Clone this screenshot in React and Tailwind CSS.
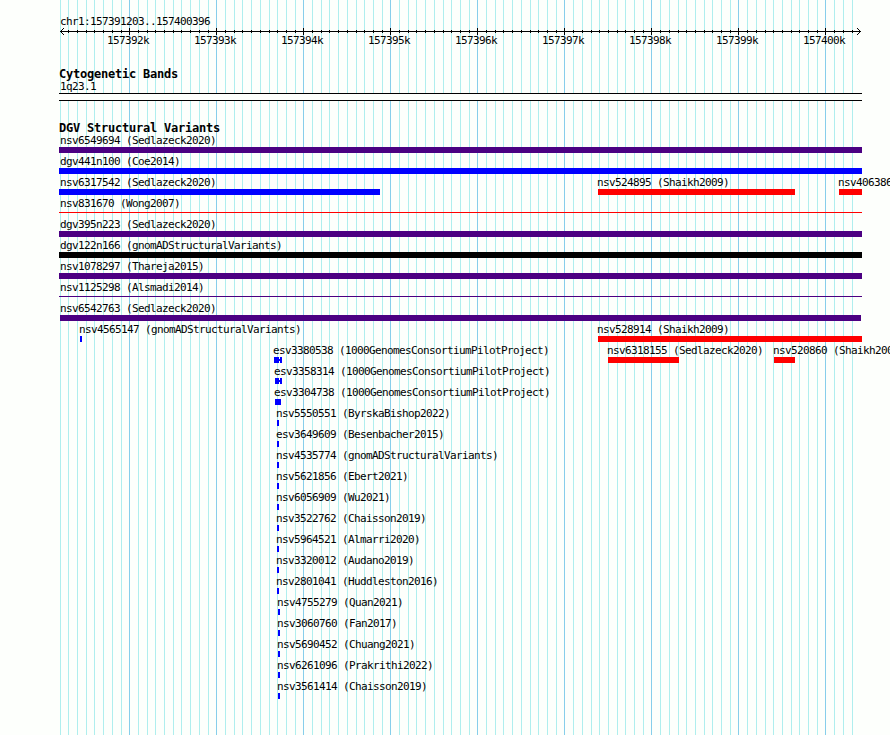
const PURPLE = 'bg-[#4b0082]'
const BLUE = 'bg-[#0000ff]'
const RED = 'bg-[#ff0000]'
const BLACK = 'bg-black'

// x and end are pixels along the panel, the name starts just left of x unless labelX is set
const ROWS = [
  [{ name: 'nsv6549694 (Sedlazeck2020)', x: 59, end: 862, color: PURPLE, labelX: 60 }],
  [{ name: 'dgv441n100 (Coe2014)', x: 59, end: 862, color: BLUE, labelX: 60 }],
  [
    { name: 'nsv6317542 (Sedlazeck2020)', x: 59, end: 380, color: BLUE, labelX: 60 },
    { name: 'nsv524895 (Shaikh2009)', x: 598, end: 795, color: RED },
    { name: 'nsv406386', x: 839, end: 862, color: RED },
  ],
  [{ name: 'nsv831670 (Wong2007)', x: 59, end: 862, color: RED, labelX: 60, thin: true }],
  [{ name: 'dgv395n223 (Sedlazeck2020)', x: 59, end: 862, color: PURPLE, labelX: 60 }],
  [{ name: 'dgv122n166 (gnomADStructuralVariants)', x: 59, end: 862, color: BLACK, labelX: 60 }],
  [{ name: 'nsv1078297 (Thareja2015)', x: 59, end: 862, color: PURPLE, labelX: 60 }],
  [{ name: 'nsv1125298 (Alsmadi2014)', x: 59, end: 862, color: PURPLE, labelX: 60, thin: true }],
  [{ name: 'nsv6542763 (Sedlazeck2020)', x: 60, end: 861, color: PURPLE, labelX: 60 }],
  [
    { name: 'nsv4565147 (gnomADStructuralVariants)', x: 80, end: 82, color: BLUE },
    { name: 'nsv528914 (Shaikh2009)', x: 598, end: 862, color: RED },
  ],
  [
    { name: 'esv3380538 (1000GenomesConsortiumPilotProject)', x: 274, end: 282, color: BLUE, split: true },
    { name: 'nsv6318155 (Sedlazeck2020)', x: 608, end: 679, color: RED },
    { name: 'nsv520860 (Shaikh2009)', x: 774, end: 795, color: RED },
  ],
  [{ name: 'esv3358314 (1000GenomesConsortiumPilotProject)', x: 275, end: 282, color: BLUE, split: true }],
  [{ name: 'esv3304738 (1000GenomesConsortiumPilotProject)', x: 275, end: 281, color: BLUE }],
  [{ name: 'nsv5550551 (ByrskaBishop2022)', x: 277, end: 279, color: BLUE }],
  [{ name: 'esv3649609 (Besenbacher2015)', x: 277, end: 279, color: BLUE }],
  [{ name: 'nsv4535774 (gnomADStructuralVariants)', x: 277, end: 279, color: BLUE }],
  [{ name: 'nsv5621856 (Ebert2021)', x: 277, end: 279, color: BLUE }],
  [{ name: 'nsv6056909 (Wu2021)', x: 277, end: 279, color: BLUE }],
  [{ name: 'nsv3522762 (Chaisson2019)', x: 277, end: 279, color: BLUE }],
  [{ name: 'nsv5964521 (Almarri2020)', x: 277, end: 279, color: BLUE }],
  [{ name: 'nsv3320012 (Audano2019)', x: 277, end: 279, color: BLUE }],
  [{ name: 'nsv2801041 (Huddleston2016)', x: 277, end: 279, color: BLUE }],
  [{ name: 'nsv4755279 (Quan2021)', x: 278, end: 280, color: BLUE }],
  [{ name: 'nsv3060760 (Fan2017)', x: 278, end: 280, color: BLUE }],
  [{ name: 'nsv5690452 (Chuang2021)', x: 278, end: 280, color: BLUE }],
  [{ name: 'nsv6261096 (Prakrithi2022)', x: 278, end: 280, color: BLUE }],
  [{ name: 'nsv3561414 (Chaisson2019)', x: 278, end: 280, color: BLUE }],
]

// one tick per 100 bp, every tenth is a labelled kilobase
const TICKS = Array.from({ length: 92 }, (_, i) => {
  const n = i - 8
  return { n, x: Math.round(129.285 + n * 8.7023), major: n % 10 === 0 }
})

function GridLines() {
  return (
    <svg className="absolute inset-0" width="890" height="735" shapeRendering="crispEdges">
      {TICKS.map((t) => (
        <rect key={t.n} x={t.x} y="0" width="1" height="735" fill={t.major ? '#87ceeb' : '#afeeee'} />
      ))}
    </svg>
  )
}

function Ruler() {
  return (
    <div className="h-[20px]">
      <svg width="890" height="8" shapeRendering="crispEdges" className="block overflow-visible">
        <rect x="60" y="4" width="801" height="1" />
        {TICKS.filter((t) => t.n > -8).map((t) => (
          <rect key={t.n} x={t.x} y={t.major ? 1 : 3} width="1" height={t.major ? 7 : 3} />
        ))}
        <path d="M61 3h1v1h-1zM62 2h1v1h-1zM63 1h1v1h-1zM61 5h1v1h-1zM62 6h1v1h-1zM63 7h1v1h-1z" />
        <path d="M859 3h1v1h-1zM858 2h1v1h-1zM857 1h1v1h-1zM859 5h1v1h-1zM858 6h1v1h-1zM857 7h1v1h-1z" />
      </svg>
      <div className="grid">
        {TICKS.filter((t) => t.major).map((t) => (
          <span key={t.n} className="col-start-1 row-start-1 h-[11px]" style={{ marginLeft: t.x - 22 }}>
            {157392 + t.n / 10}k
          </span>
        ))}
      </div>
    </div>
  )
}

function Feature({ name, x, end, color, labelX, thin, split }) {
  return (
    <div className="col-start-1 row-start-1">
      <div className="h-[12px]" style={{ marginLeft: labelX ?? x - 1 }}>{name}</div>
      <div className="flex h-[6px] items-center" style={{ marginLeft: x, width: end - x }}>
        {split ? (
          <>
            <div className={`h-full flex-1 ${color}`} />
            <div className={`h-[2px] w-px ${color}`} />
            <div className={`h-full w-[2px] ${color}`} />
          </>
        ) : (
          <div className={`w-full ${thin ? 'mb-px h-px' : 'h-full'} ${color}`} />
        )}
      </div>
    </div>
  )
}

function Heading({ children }) {
  return (
    <h2 className="ml-[59px] h-[13px] text-[12px] leading-[13px] font-bold tracking-[-0.22px]">{children}</h2>
  )
}

export default function App() {
  return (
    <div className="relative h-[735px] w-[890px] overflow-hidden bg-[#fdfffc] font-['DejaVu_Sans_Mono',monospace] text-[11px] leading-[11px] tracking-[-0.622px] whitespace-nowrap text-black">
      <GridLines />
      <main className="relative pt-[16px]">
        <div className="ml-[60px] h-[11px]">chr1:157391203..157400396</div>
        <Ruler />

        <section className="pt-[21px]">
          <Heading>Cytogenetic Bands</Heading>
          <div className="ml-[60px] h-[12px]">1q23.1</div>
          <div className="ml-[59px] h-[8px] w-[803px] border-y border-black bg-[#fdfffc]" />
        </section>

        <section className="pt-[21px]">
          <Heading>DGV Structural Variants</Heading>
          <div className="flex flex-col">
            {ROWS.map((row) => (
              <div key={row[0].name} className="grid h-[21px]">
                {row.map((f) => (
                  <Feature key={f.name} {...f} />
                ))}
              </div>
            ))}
          </div>
        </section>
      </main>
    </div>
  )
}
